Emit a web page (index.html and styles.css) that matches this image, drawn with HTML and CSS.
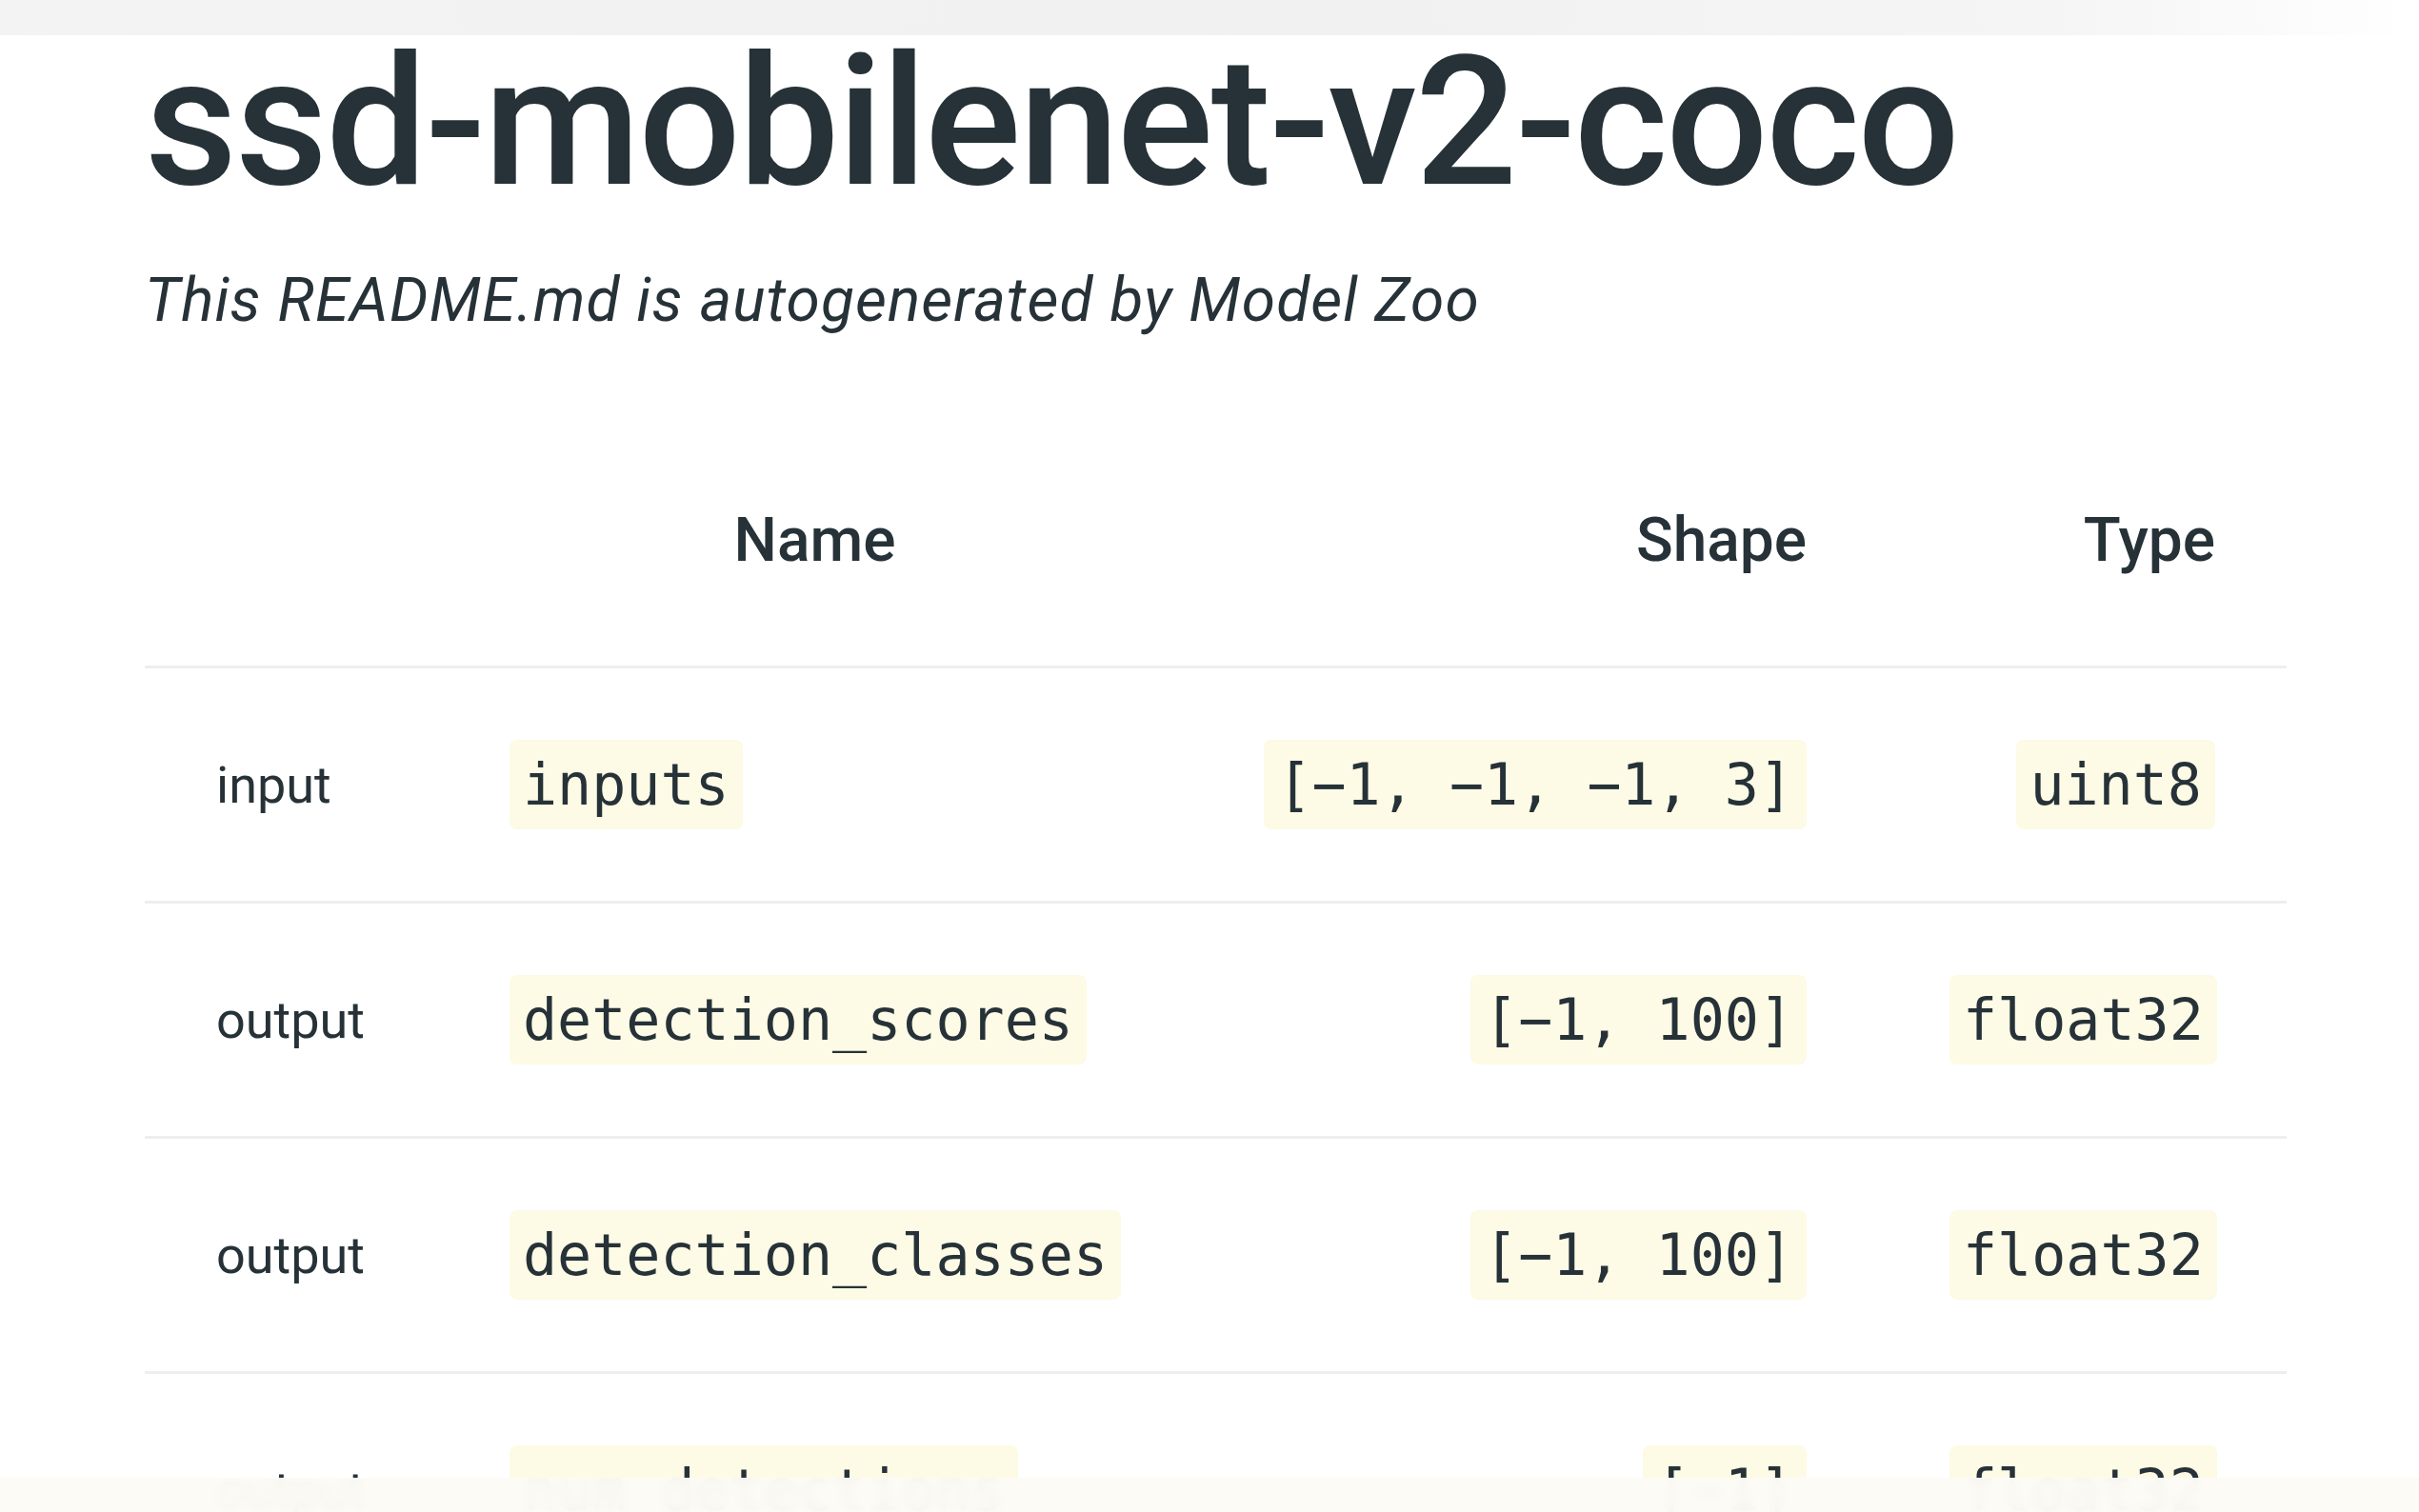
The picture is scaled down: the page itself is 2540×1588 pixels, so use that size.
FILE: index.html
```html
<!DOCTYPE html>
<html lang="en">
<head>
<meta charset="utf-8">
<title>ssd-mobilenet-v2-coco</title>
<link rel="stylesheet" href="styles.css">
</head>
<body>
<div class="topbar"></div>
<main class="page">
  <h1 class="title">ssd-mobilenet-v2-coco</h1>
  <p class="subtitle">This README.md is autogenerated by Model Zoo</p>
  <div class="table">
    <div class="row head">
      <div class="cell"></div>
      <div class="cell center">Name</div>
      <div class="cell right">Shape</div>
      <div class="cell right">Type</div>
    </div>
    <div class="row">
      <div class="cell kind">input</div>
      <div class="cell"><code class="pill">inputs</code></div>
      <div class="cell right"><code class="pill">[−1, −1, −1, 3]</code></div>
      <div class="cell right"><code class="pill">uint8</code></div>
    </div>
    <div class="row">
      <div class="cell kind">output</div>
      <div class="cell"><code class="pill">detection_scores</code></div>
      <div class="cell right"><code class="pill">[−1, 100]</code></div>
      <div class="cell right"><code class="pill">float32</code></div>
    </div>
    <div class="row">
      <div class="cell kind">output</div>
      <div class="cell"><code class="pill">detection_classes</code></div>
      <div class="cell right"><code class="pill">[−1, 100]</code></div>
      <div class="cell right"><code class="pill">float32</code></div>
    </div>
    <div class="row">
      <div class="cell kind">output</div>
      <div class="cell"><code class="pill">num_detections</code></div>
      <div class="cell right"><code class="pill">[−1]</code></div>
      <div class="cell right"><code class="pill">float32</code></div>
    </div>
  </div>
</main>
<div class="bottomfade"></div>
</body>
</html>
```

FILE: styles.css
```css
html, body {
  margin: 0;
  padding: 0;
  background: #ffffff;
  height: 100%;
  overflow: hidden;
}

body {
  position: relative;
  color: #263238;
  font-family: Roboto, "Liberation Sans", sans-serif;
}

.topbar {
  position: absolute;
  left: 0;
  top: 0;
  width: 100%;
  height: 37px;
  background: linear-gradient(to right, #f3f3f3 0%, #f1f1f1 55%, #f5f5f5 85%, #ffffff 100%);
  z-index: 2;
}

.page {
  padding: 34px 0 0 152px;
}

.title {
  margin: 0;
  font-family: Roboto, "Liberation Sans", sans-serif;
  font-weight: 500;
  font-size: 189px;
  line-height: 189px;
  letter-spacing: -2.3px;
  color: #263238;
}

.subtitle {
  margin: 61px 0 0 0;
  font-family: Roboto, "Liberation Sans", sans-serif;
  font-style: italic;
  font-weight: 400;
  font-size: 64px;
  line-height: 63px;
  letter-spacing: 1.1px;
  color: #263238;
}

.table {
  margin-top: 89px;
  width: 2249px;
}

.row {
  display: grid;
  grid-template-columns: 308px 791px 721px 429px;
  align-items: center;
  height: 244px;
  border-bottom: 3px solid #eeeeee;
}

.row.head {
  height: 263px;
}

.cell {
  padding: 0 75px;
  min-width: 0;
  white-space: nowrap;
}

.head .cell {
  font-family: Roboto, "Liberation Sans", sans-serif;
  font-weight: 500;
  font-size: 64px;
  line-height: 75px;
}

.center { text-align: center; }
.right { text-align: right; }

.kind {
  font-family: Roboto, "Liberation Sans", sans-serif;
  font-size: 54px;
  font-weight: 400;
  color: #263238;
}

.pill {
  display: inline-block;
  vertical-align: middle;
  font-family: "DejaVu Sans Mono", "Liberation Mono", monospace;
  font-size: 60px;
  line-height: 70px;
  padding: 12px 14px;
  border-radius: 8px;
  background: #fdfae5;
  color: #263238;
}

.bottomfade {
  position: absolute;
  left: 0;
  bottom: 0;
  width: 100%;
  height: 36px;
  background: rgba(252, 251, 246, 0.97);
  backdrop-filter: blur(6px);
  z-index: 2;
}
```
